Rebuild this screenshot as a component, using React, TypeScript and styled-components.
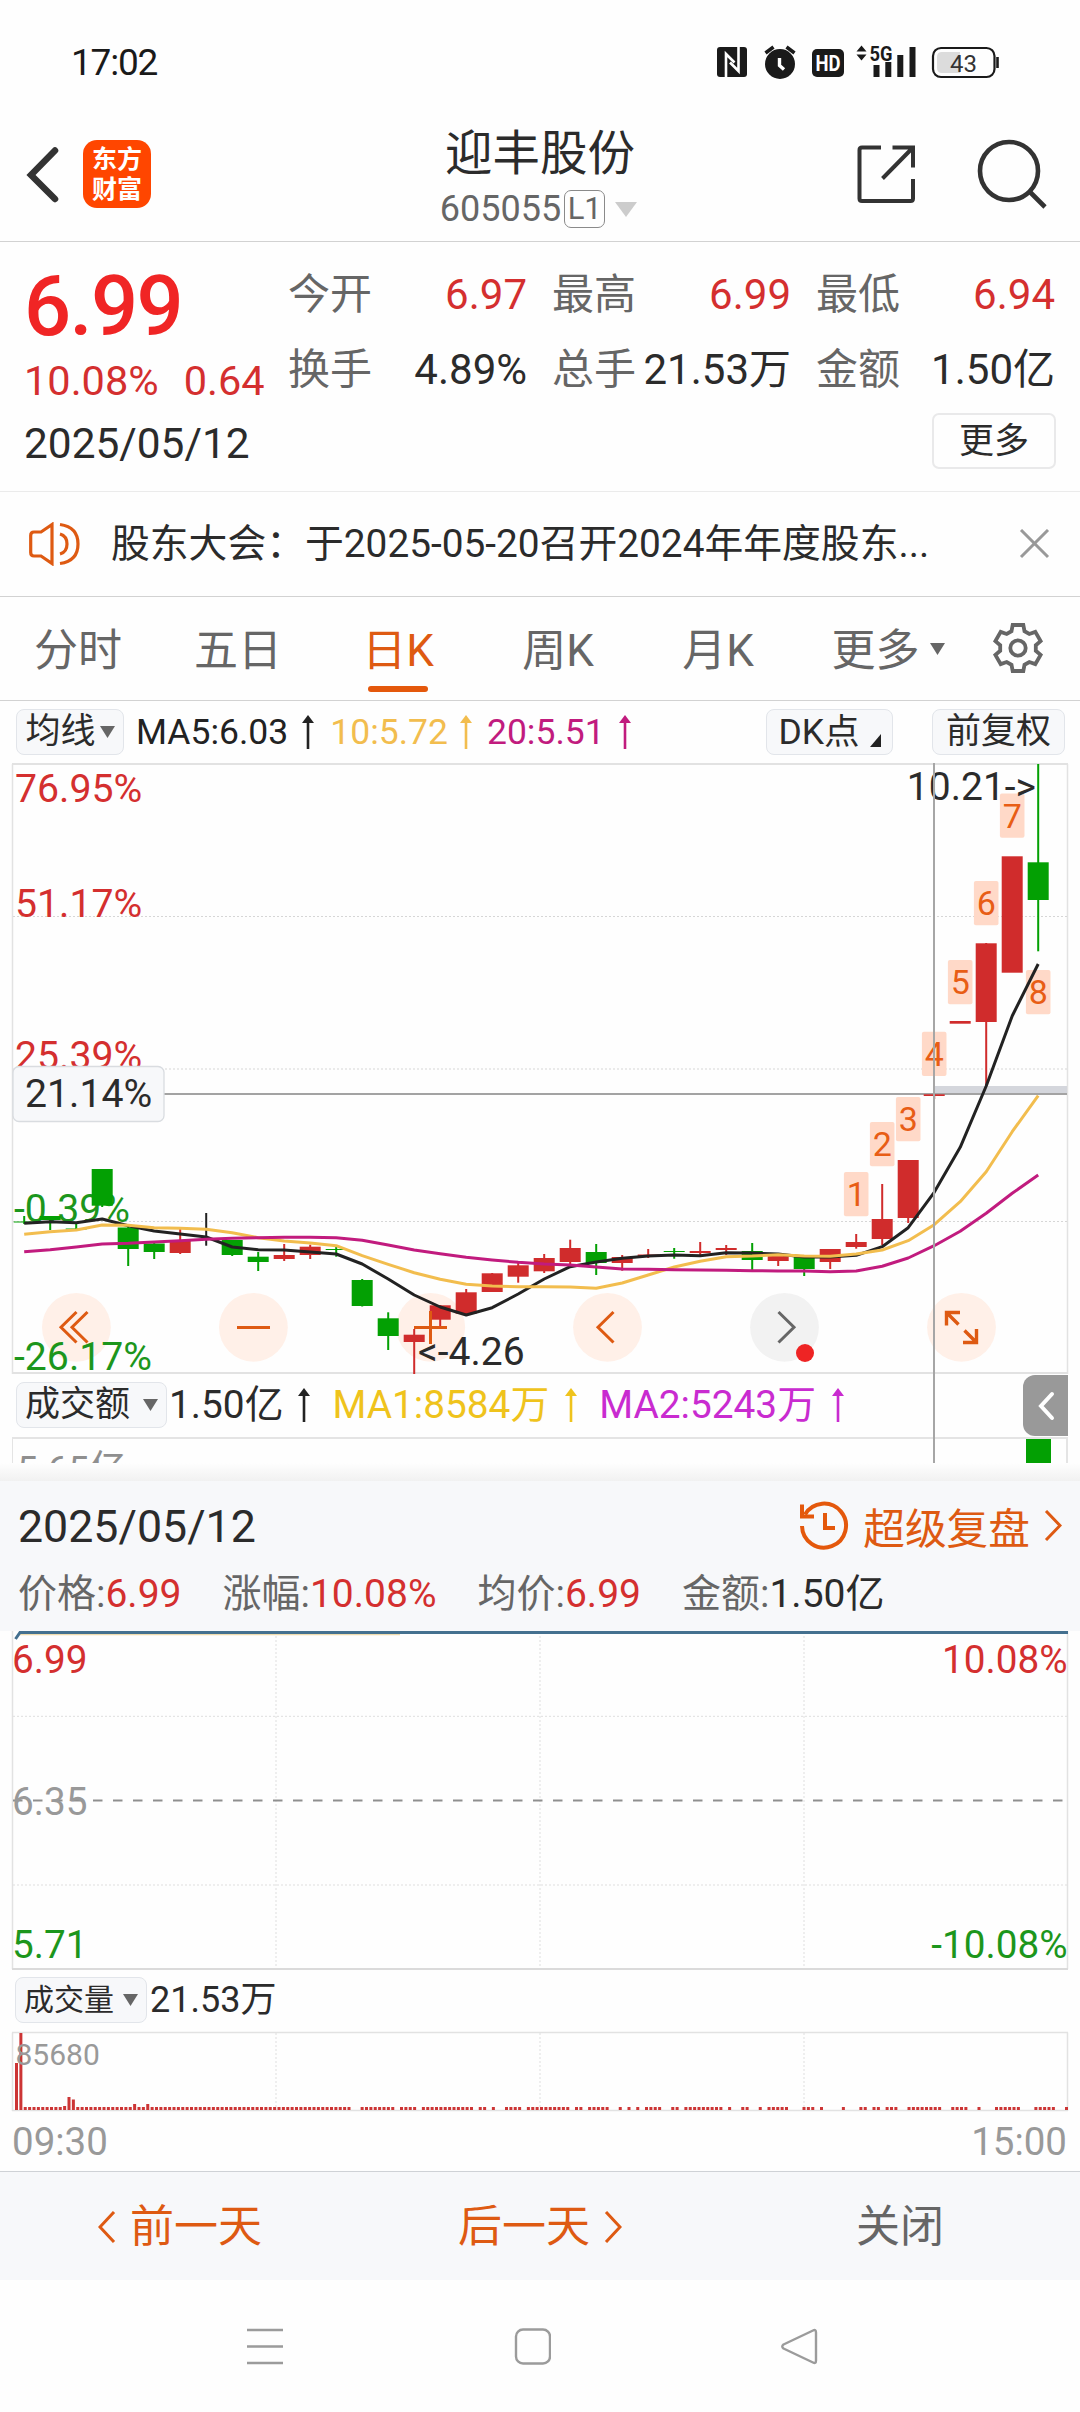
import React from "react";
import styled, { createGlobalStyle } from "styled-components";

const RED = "#d42f2f";
const GREEN = "#03a003";
const ORANGE = "#de5a12";
const INK = "#2b2b2b";
const GREY = "#666";
const MUTED = "#999";

const GlobalStyle = createGlobalStyle`
  * { box-sizing: border-box; }
  body {
    margin: 0;
    background: #fefefe;
    font-family: Roboto, "Noto Sans CJK SC", sans-serif;
    color: ${INK};
  }
  svg { display: block; flex: none; }
`;

const Screen = styled.div`
  width: 1080px;
  height: 2412px;
  display: flex;
  flex-direction: column;
  overflow: hidden;
  background: #fefefe;
`;

/* ---------- status bar ---------- */

const StatusBar = styled.div`
  height: 96px;
  padding: 27px 81px 0 71px;
  display: flex;
  justify-content: space-between;
`;
const Clock = styled.span`
  font-size: 37px;
  line-height: 72px;
  height: 72px;
  letter-spacing: -1.2px;
  color: #1a1a1a;
`;
const StatusIcons = styled.svg`
  margin-top: 13px;
`;

/* ---------- header ---------- */

const Header = styled.header`
  height: 146px;
  display: grid;
  grid-template-columns: 1fr 240px 1fr;
  border-bottom: 1px solid #d2d2d2;
`;
const HeaderLeft = styled.div`
  display: flex;
  align-items: flex-start;
  gap: 22px;
  padding: 44px 0 0 26px;
`;
const BackIcon = styled.svg`
  margin-top: 6px;
`;
const Logo = styled.div`
  width: 68px;
  height: 68px;
  border-radius: 14px;
  background: #ff4600;
  color: #fff;
  font-size: 25px;
  font-weight: 700;
  line-height: 30px;
  text-align: center;
  padding-top: 5px;
  margin-left: 1px;
`;
const HeaderTitle = styled.div`
  display: flex;
  flex-direction: column;
  align-items: center;
  padding-top: 30px;
`;
const StockName = styled.div`
  font-size: 47.5px;
  line-height: 57px;
  white-space: nowrap;
`;
const CodeRow = styled.div`
  display: flex;
  align-items: center;
  height: 52px;
  margin-left: -3px;
  color: ${GREY};
  font-size: 36px;
`;
const LevelTag = styled.span`
  height: 38px;
  width: 41px;
  margin: 0 10px 0 3px;
  border: 1.5px solid #8a8a8a;
  border-radius: 7px;
  font-size: 31px;
  line-height: 35px;
  text-align: center;
`;
const HeaderRight = styled.div`
  display: flex;
  justify-content: flex-end;
  gap: 60px;
  padding: 42px 30px 0 0;
`;

/* ---------- quote ---------- */

const Quote = styled.section`
  height: 250px;
  padding: 15px 25px 0 24px;
  border-bottom: 1px solid #ebebeb;
`;
const QuoteTop = styled.div`
  display: flex;
  height: 156px;
`;
const PriceBlock = styled.div`
  width: 264px;
  padding-top: 9px;
  color: ${RED};
`;
const BigPrice = styled.div`
  font-size: 83px;
  font-weight: 500;
  line-height: 82px;
  letter-spacing: -1.6px;
  color: #f02525;
`;
const ChangeRow = styled.div`
  display: flex;
  gap: 25px;
  font-size: 41.5px;
  line-height: 66px;
`;
const StatGrid = styled.div`
  flex: 1;
  display: grid;
  grid-template-columns: repeat(3, 239px);
  grid-auto-rows: 75px;
  column-gap: 25px;
`;
const Stat = styled.div`
  display: flex;
  justify-content: space-between;
  font-size: 42px;
  line-height: 75px;
  white-space: nowrap;
`;
const StatLabel = styled.span`
  color: ${GREY};
`;
const StatValue = styled.span<{ $red?: boolean }>`
  color: ${(p) => (p.$red ? RED : INK)};
`;
const QuoteBottom = styled.div`
  display: flex;
  justify-content: space-between;
  align-items: flex-start;
  font-size: 42.4px;
  line-height: 62px;
`;
const MoreButton = styled.button`
  width: 124px;
  height: 56px;
  margin-right: -1px;
  padding: 0;
  border: 2px solid #e9e9ea;
  border-radius: 7px;
  background: #fefefe;
  font: 35px/54px Roboto, "Noto Sans CJK SC", sans-serif;
  color: ${INK};
`;

/* ---------- news ---------- */

const NewsBar = styled.div`
  height: 105px;
  display: flex;
  align-items: center;
  padding: 0 30px 0 29px;
  border-bottom: 1px solid #d2d2d2;
  font-size: 38.8px;
`;
const NewsText = styled.span`
  flex: 1;
  margin-left: 30px;
  line-height: 60px;
`;

/* ---------- tabs ---------- */

const Tabs = styled.nav`
  height: 104px;
  display: flex;
  border-bottom: 1px solid #d2d2d2;
`;
const Tab = styled.div<{ $active?: boolean; $wide?: boolean }>`
  width: ${(p) => (p.$wide ? 180 : 160)}px;
  display: flex;
  flex-direction: column;
  align-items: center;
  font-size: 44px;
  line-height: 62px;
  padding: 23px 4px 0 0;
  color: ${(p) => (p.$active ? ORANGE : GREY)};
`;
const TabLabel = styled.span`
  display: flex;
  align-items: center;
  gap: 10px;
`;
const TabMark = styled.i`
  width: 60px;
  height: 6px;
  margin-top: 4px;
  border-radius: 3px;
  background: #e4580c;
`;
const TabCaret = styled.span`
  margin-top: -4px;
`;
const GearSlot = styled.div`
  padding: 24px 0 0 11px;
`;

/* ---------- indicator rows ---------- */

const IndicatorRow = styled.div<{ $h: number; $top: number; $size: number }>`
  height: ${(p) => p.$h}px;
  padding: ${(p) => p.$top}px 15px 0 16px;
  display: flex;
  align-items: flex-start;
  font-size: ${(p) => p.$size}px;
  white-space: nowrap;
`;
const Chip = styled.div<{ $w: number; $size?: number; $gap?: number; $ml?: number }>`
  width: ${(p) => p.$w}px;
  height: 46px;
  margin-left: ${(p) => p.$ml ?? 0}px;
  display: flex;
  align-items: center;
  justify-content: center;
  gap: ${(p) => p.$gap ?? 4}px;
  border: 1.5px solid #e2e5ea;
  border-radius: 8px;
  background: #f7f8fa;
  font-size: ${(p) => p.$size ?? 35}px;
  line-height: 46px;
`;
const IndicatorValue = styled.div<{ $c: string; $ml: number; $gap: number }>`
  display: flex;
  align-items: center;
  gap: ${(p) => p.$gap}px;
  margin-left: ${(p) => p.$ml}px;
  height: 46px;
  line-height: 46px;
  color: ${(p) => p.$c};
`;
const Push = styled.div`
  flex: 1;
`;

/* ---------- chart area ---------- */

const ChartStack = styled.div`
  position: relative;
  height: 700px;
`;
const CrossHair = styled.i`
  position: absolute;
  left: 933px;
  top: 0;
  width: 2px;
  height: 700px;
  background: #a6a6a6;
`;
const CollapseTab = styled.div`
  position: absolute;
  right: 12px;
  top: 612px;
  width: 45px;
  height: 61px;
  display: flex;
  align-items: center;
  justify-content: center;
  border-radius: 12px 0 0 12px;
  background: #999;
`;
const VolumePeek = styled.div`
  height: 26px;
  margin: 0 12px;
  padding-left: 4px;
  display: flex;
  justify-content: space-between;
  overflow: hidden;
  border: solid #e4e4e4;
  border-width: 2px 2px 0 1px;
  color: #8f8f8f;
  font-size: 37px;
  line-height: 62px;
`;
const PeekBar = styled.i`
  width: 25px;
  height: 26px;
  margin-right: 15px;
  background: ${GREEN};
`;

/* ---------- replay panel ---------- */

const PanelShadow = styled.div`
  height: 18px;
  background: linear-gradient(#fefefe, #f1f1f1);
`;
const ReplayHead = styled.section`
  height: 150px;
  padding: 16px 18px 0;
  background: #f7f8fa;
`;
const ReplayTitle = styled.div`
  display: flex;
  align-items: center;
  height: 60px;
  font-size: 44.7px;
`;
const ReplayLink = styled.div`
  margin-left: auto;
  margin-top: -3px;
  display: flex;
  align-items: center;
  gap: 14px;
  color: ${ORANGE};
  font-size: 41.7px;
`;
const ReplayStats = styled.div`
  display: flex;
  gap: 41px;
  height: 74px;
  font-size: 39px;
  line-height: 74px;
  color: ${GREY};
`;

const VolumeHead = styled.div`
  height: 60px;
  padding: 7px 15px 0;
  display: flex;
  gap: 3px;
  font-size: 36px;
  line-height: 47px;
`;
const TimeAxis = styled.div`
  height: 59px;
  padding: 0 13px 0 12px;
  display: flex;
  justify-content: space-between;
  color: ${MUTED};
  font-size: 38.5px;
  line-height: 60px;
`;
const DayBar = styled.div`
  height: 109px;
  display: grid;
  grid-template-columns: repeat(3, 360px);
  align-items: center;
  border-top: 1px solid #cfd2d6;
  background: #f7f8fa;
  font-size: 44px;
`;
const DayButton = styled.div<{ $c: string }>`
  display: flex;
  align-items: center;
  justify-content: center;
  gap: 14px;
  padding-top: 2px;
  color: ${(p) => p.$c};
  line-height: 60px;
`;
const SystemNav = styled.div`
  height: 132px;
  padding: 48px 262px 0 247px;
  display: flex;
  justify-content: space-between;
`;

/* ---------- small drawings ---------- */

const Down = ({ w = 15, h = 12, c = "#666" }: { w?: number; h?: number; c?: string }) => (
  <svg width={w} height={h} viewBox="0 0 10 10" preserveAspectRatio="none">
    <path d="M0 0H10L5 10Z" fill={c} />
  </svg>
);

const UpArrow = ({ c }: { c: string }) => (
  <svg width="12" height="34" viewBox="0 0 12 34">
    <path d="M6 4V34" stroke={c} strokeWidth="2.6" />
    <path d="M0 8L6 0L12 8Z" fill={c} />
  </svg>
);

const Chevron = ({ dir, c, w = 18, h = 32, s = 3 }: { dir: "l" | "r"; c: string; w?: number; h?: number; s?: number }) => (
  <svg width={w} height={h} viewBox={`0 0 ${w} ${h}`} fill="none" stroke={c} strokeWidth={s}>
    <path d={dir === "l" ? `M${w - 2} 1L2 ${h / 2}L${w - 2} ${h - 1}` : `M2 1L${w - 2} ${h / 2}L2 ${h - 1}`} />
  </svg>
);

const K = "#1a1a1a";
const Status = () => (
  <StatusIcons width="284" height="40" viewBox="715 40 284 40">
    <rect x="717" y="47" width="30" height="30" rx="3" fill={K} />
    <path d="M726 77V54L734.500 62.500" fill="none" stroke="#fff" strokeWidth="2.600" />
    <path d="M738.500 47V71L730 62.500" fill="none" stroke="#fff" strokeWidth="2.600" />
    <circle cx="780" cy="64" r="15" fill={K} />
    <path d="M765.500 53L773.500 47M794.500 53L786.500 47" stroke={K} strokeWidth="3.600" />
    <path d="M779.500 58V65.500L784 69.500" fill="none" stroke="#fff" strokeWidth="3.400" />
    <rect x="812" y="49" width="32" height="28" rx="5" fill={K} />
    <text x="828" y="71" fontSize="22" fontWeight="700" fill="#fff" textAnchor="middle" textLength="25" lengthAdjust="spacingAndGlyphs">HD</text>
    <path d="M856.500 51.500L861.500 45.500L866.500 51.500ZM856.500 54.500H866.500L861.500 60.500Z" fill={K} />
    <text x="869.500" y="60.500" fontSize="21" fontWeight="700" fill={K} textLength="23" lengthAdjust="spacingAndGlyphs">5G</text>
    <path d="M873.500 65h6v12h-6zM885.300 62h6v15h-6zM897.300 55h6v22h-6zM909.500 47h6v30h-6z" fill={K} />
    <rect x="933" y="48" width="61.500" height="29" rx="8" fill="none" stroke={K} strokeWidth="2.200" />
    <path d="M942 52H960V73H942Q937 73 937 68V57Q937 52 942 52Z" fill="#dcdcdc" />
    <path d="M997.500 57V68" stroke={K} strokeWidth="2.600" />
    <text x="963.500" y="71.500" fontSize="24" fill="#333" textAnchor="middle">43</text>
  </StatusIcons>
);

const gearOutline = Array.from({ length: 6 }, (_, i) => -90 + i * 60)
  .flatMap((base) =>
    [[-21, 18], [-13, 23.6], [13, 23.6], [21, 18]].map(([a, r]) => {
      const t = ((base + a) * Math.PI) / 180;
      return `${(27 + r * Math.cos(t)).toFixed(1)},${(27 + r * Math.sin(t)).toFixed(1)}`;
    })
  )
  .join(" ");

const Gear = () => (
  <svg width="54" height="54" viewBox="0 0 54 54" fill="none" stroke="#666" strokeWidth="3.8">
    <polygon points={gearOutline} />
    <circle cx="27" cy="27" r="7.700" />
  </svg>
);

/* ---------- daily chart data ---------- */

const X0 = 24.2;
const STEP = 26;
const cx = (i: number) => X0 + STEP * i;

type Candle = [kind: "r" | "g" | "k", top: number, bottom: number, high: number, low: number];
const candles: Candle[] = [
  ["g", 1221.5, 1222.5, 1216, 1224],
  ["g", 1216, 1220, 1216, 1230],
  ["g", 1228.5, 1229.5, 1222, 1231],
  ["g", 1169, 1205.7, 1169, 1207],
  ["g", 1227.5, 1249, 1227, 1266],
  ["g", 1243.5, 1252, 1243, 1259],
  ["r", 1241, 1253, 1229, 1254],
  ["k", 1236, 1237.5, 1213, 1245.7],
  ["g", 1240, 1255, 1240, 1256],
  ["g", 1256.7, 1262, 1252, 1271],
  ["r", 1255, 1259, 1244, 1261],
  ["r", 1246.7, 1255, 1244.7, 1259],
  ["g", 1249, 1250, 1246, 1256.7],
  ["g", 1280, 1306, 1279, 1306.5],
  ["g", 1318.3, 1336, 1312.3, 1350],
  ["r", 1334.7, 1342, 1329, 1374],
  ["r", 1305.3, 1319.7, 1305, 1326],
  ["r", 1292.3, 1313.7, 1289, 1314],
  ["r", 1273.3, 1292, 1273, 1292],
  ["r", 1265.3, 1276.7, 1261, 1282.7],
  ["r", 1258, 1271.3, 1254, 1273],
  ["r", 1248, 1262, 1239.7, 1264],
  ["g", 1252, 1263, 1244, 1275],
  ["r", 1257, 1263, 1255, 1270.7],
  ["r", 1254.5, 1256, 1249, 1258],
  ["g", 1251, 1252, 1248, 1258.7],
  ["r", 1251, 1253, 1242, 1255],
  ["r", 1248, 1250, 1245, 1255],
  ["g", 1251, 1260, 1243, 1272],
  ["r", 1255, 1261, 1255, 1266],
  ["g", 1256.7, 1269, 1256, 1276],
  ["r", 1249, 1262, 1249, 1269],
  ["r", 1242, 1247, 1234, 1248.7],
  ["r", 1219, 1239, 1184, 1245],
  ["r", 1160, 1218, 1160, 1223],
  ["r", 1094.3, 1096, 1094, 1099],
  ["r", 1021, 1023.7, 1021, 1023],
  ["r", 943.3, 1022, 943, 1086],
  ["r", 856.3, 972.7, 857, 972],
  ["g", 862.3, 900, 764, 951.3],
];
const ma5 = [1223.3, 1221.7, 1222.7, 1219, 1225.7, 1231, 1234, 1237, 1247, 1249.7, 1250, 1252, 1254, 1264, 1279, 1295, 1307, 1315, 1307.7, 1294, 1279, 1266.7, 1262, 1258.3, 1256, 1255, 1255.7, 1252.7, 1253, 1254, 1257, 1257, 1255.3, 1246.7, 1227.7, 1192.3, 1147.3, 1086, 1016, 964];
const ma10 = [1234.3, 1231.7, 1230, 1225, 1225.3, 1227.7, 1228.3, 1229.3, 1232.7, 1237.7, 1241, 1243, 1245.7, 1255.7, 1264.3, 1272.7, 1279.3, 1284.3, 1286, 1286.7, 1286.7, 1287, 1288.3, 1283, 1275, 1267, 1261.3, 1256.7, 1256, 1254.7, 1256, 1256.3, 1254, 1250, 1240.7, 1224.7, 1201.7, 1171.7, 1131.7, 1095.7];
const ma20 = [1251.7, 1249.7, 1247, 1244, 1243.3, 1242, 1240.7, 1239.3, 1238.3, 1237.7, 1237.3, 1237.3, 1237.7, 1240.3, 1245, 1250, 1253.7, 1257.3, 1260, 1262.3, 1264, 1265, 1267, 1269, 1269.3, 1269.7, 1270, 1270.3, 1270.7, 1271, 1271, 1271.7, 1271, 1266.3, 1258, 1245.7, 1231.3, 1213.3, 1193.3, 1175];
const line = (v: number[]) => v.map((y, i) => `${cx(i).toFixed(1)},${y}`).join(" ");

const badges: [string, number, number][] = [
  ["1", 32, 1172], ["2", 33, 1122], ["3", 34, 1097], ["4", 35, 1031.7],
  ["5", 36, 960], ["6", 37, 881], ["7", 38, 793.5], ["8", 39, 970],
];
const kindColor = { r: "#d02c2c", g: GREEN, k: "#222" };
const tools = [76.4, 253.4, 430.7, 607.5, 784.5, 961.5];

const DailyChart = () => (
  <svg width="1080" height="611" viewBox="0 763 1080 611">
    <path d="M12.500 764V1374M1067.500 764V1374" stroke="#e2e2e2" strokeWidth="1.500" />
    <path d="M12 764H1068M12 1373H1068" stroke="#e2e2e2" strokeWidth="2" />
    <path d="M13 916.500H1068M13 1069H1068M13 1221.500H1068" stroke="#d6d6d6" strokeWidth="1" strokeDasharray="2 2" />
    {tools.map((x, i) => (
      <circle key={x} cx={x} cy="1327.300" r="34.400" fill={i === 4 ? "#f2f2f2" : "#fff0e8"} />
    ))}
    <g fontSize="39.200" fill={RED}>
      <text x="15" y="802">76.95%</text>
      <text x="15" y="917">51.17%</text>
      <text x="15" y="1068.500">25.39%</text>
      <g fill="#1c961c">
        <text x="14" y="1222">-0.39%</text>
        <text x="14" y="1370">-26.17%</text>
      </g>
    </g>
    <rect x="934" y="1086" width="133" height="8" fill="#d4d6dc" />
    <path d="M164 1094H1067" stroke="#a3a3a3" strokeWidth="2" />
    {candles.map(([k, t, b, h, l], i) => (
      <g key={i} fill={kindColor[k]}>
        <rect x={cx(i) - 1} y={h} width="2" height={l - h} />
        {k !== "k" && <rect x={cx(i) - 10.5} y={t} width="21" height={Math.max(b - t, 1)} />}
      </g>
    ))}
    {badges.map(([n, i, y]) => (
      <g key={n}>
        <rect x={cx(i) - 12.3} y={y} width="24.600" height="44.200" rx="2" fill="#ffd9c8" />
        <text x={cx(i)} y={y + 34} fontSize="34" fill="#e85d15" textAnchor="middle">{n}</text>
      </g>
    ))}
    <g fill="none" strokeWidth="3" strokeLinejoin="round">
      <polyline points={line(ma5)} stroke="#222" />
      <polyline points={line(ma10)} stroke="#f2bd4e" />
      <polyline points={line(ma20)} stroke="#c11b7e" />
    </g>
    <g fill="none" stroke={ORANGE} strokeWidth="3">
      <path d="M76.500 1312L61 1327.300L76.500 1342.500M87.500 1312L72 1327.300L87.500 1342.500" />
      <path d="M237 1327.500H270M414 1327.500H447M430.500 1311V1344" />
      <path d="M613.500 1312L598 1327.300L613.500 1342.500" />
      <path d="M778.500 1312L794 1327.300L778.500 1342.500" stroke="#666" />
      <path d="M960 1312.500H946.500V1325.500M947 1313L958.500 1324.500M963 1342.500H976.500V1329M976 1342L964.500 1330.500" strokeWidth="3.400" />
    </g>
    <circle cx="805" cy="1353" r="9" fill="#ee2424" />
    <g fontSize="39" fill={INK}>
      <text x="418" y="1365">&lt;-4.26</text>
      <text x="1036" y="800" textAnchor="end">10.21-&gt;</text>
    </g>
    <rect x="13" y="1066.500" width="151" height="55" rx="6" fill="#f7f8fa" stroke="#d9dce0" strokeWidth="1.300" />
    <text x="25" y="1107" fontSize="39.200" fill={INK}>21.14%</text>
  </svg>
);

/* ---------- intraday charts ---------- */

const IntradayChart = () => (
  <svg width="1080" height="339" viewBox="0 1631 1080 339">
    <path d="M12.500 1631V1969M1067.500 1631V1969" stroke="#e2e2e2" strokeWidth="1.500" />
    <path d="M12 1969H1068" stroke="#dadada" strokeWidth="2" />
    <path d="M276 1636V1968M540 1636V1968M804 1636V1968M13 1716.300H1068M13 1885H1068" stroke="#dedede" strokeWidth="1" strokeDasharray="2 2" />
    <path d="M13 1800.500H1068" stroke="#8f8f8f" strokeWidth="2" strokeDasharray="9.500 10.500" />
    <path d="M20 1634.500H400" stroke="#f0dcae" strokeWidth="1.500" />
    <path d="M15.500 1639L20 1632.500H1068" stroke="#44708f" strokeWidth="3" fill="none" />
    <g fontSize="38.700">
      <text x="12" y="1673" fill={RED}>6.99</text>
      <text x="1067.500" y="1673" fill={RED} textAnchor="end">10.08%</text>
      <text x="12" y="1815" fill={MUTED}>6.35</text>
      <text x="12" y="1958" fill="#1c961c">5.71</text>
      <text x="1067.500" y="1958" fill="#1c961c" textAnchor="end">-10.08%</text>
    </g>
  </svg>
);

const volumeRuns = [
  [2, 76], [79, 86], [88, 91], [93, 104], [106, 107], [109, 109], [112, 115], [117, 126], [128, 129],
  [131, 135], [138, 138], [140, 140], [142, 142], [144, 147], [150, 151], [153, 161], [163, 163],
  [166, 167], [170, 170], [172, 176], [180, 182], [184, 184], [189, 189], [193, 194], [196, 197],
  [199, 201], [204, 211], [214, 217], [220, 220], [224, 229], [233, 237], [240, 240],
];
const tallBars: Record<number, number> = { 11: 4, 12: 13, 13: 10.5, 27: 6, 30: 6 };
const volumeBars: [number, number][] = [[0, 47], [1, 77]];
volumeRuns.forEach(([a, b]) => {
  for (let k = a; k <= b; k++) volumeBars.push([k, tallBars[k] ?? 3]);
});

const VolumeChart = () => (
  <svg width="1080" height="82" viewBox="0 2030 1080 82">
    <path d="M12.500 2032.500V2111M1067.500 2032.500V2111M12 2032.500H1068M12 2110.500H1068" stroke="#e2e2e2" strokeWidth="1.500" />
    <path d="M276 2033V2110M540 2033V2110M804 2033V2110" stroke="#dedede" strokeWidth="1" strokeDasharray="2 2" />
    {volumeBars.map(([k, h]) => (
      <rect key={k} x={15 + k * 4.375} y={2110 - h} width="3" height={h} fill="#cc3535" />
    ))}
    <text x="15.500" y="2065" fontSize="30" fill={MUTED}>85680</text>
  </svg>
);

const stats: [string, string, boolean][] = [
  ["今开", "6.97", true], ["最高", "6.99", true], ["最低", "6.94", true],
  ["换手", "4.89%", false], ["总手", "21.53万", false], ["金额", "1.50亿", false],
];

export default function App() {
  return (
    <>
      <GlobalStyle />
      <Screen>
        <StatusBar>
          <Clock>17:02</Clock>
          <Status />
        </StatusBar>

        <Header>
          <HeaderLeft>
            <BackIcon width="34" height="58" viewBox="0 0 34 58" fill="none" stroke="#333" strokeWidth="6.500" strokeLinecap="round" strokeLinejoin="miter">
              <path d="M29 4.500L5 29L29 53" />
            </BackIcon>
            <Logo>东方<br />财富</Logo>
          </HeaderLeft>
          <HeaderTitle>
            <StockName>迎丰股份</StockName>
            <CodeRow>
              605055
              <LevelTag>L1</LevelTag>
              <Down w={22} h={15} c="#ccc" />
            </CodeRow>
          </HeaderTitle>
          <HeaderRight>
            <svg width="62" height="66" viewBox="855 138 62 66" fill="none" stroke="#333" strokeWidth="4">
              <path d="M881 147.500H862Q859.500 147.500 859.500 150V198.500Q859.500 201 862 201H910.500Q913 201 913 198.500V179" />
              <path d="M892.500 147.500H913V167.500M913 147.500L882.500 178.500" />
            </svg>
            <svg width="73" height="72" viewBox="977 138 73 72" fill="none" stroke="#333" strokeWidth="4.600">
              <circle cx="1009" cy="171" r="29" />
              <path d="M1030 192L1045 207" />
            </svg>
          </HeaderRight>
        </Header>

        <Quote>
          <QuoteTop>
            <PriceBlock>
              <BigPrice>6.99</BigPrice>
              <ChangeRow><span>10.08%</span><span>0.64</span></ChangeRow>
            </PriceBlock>
            <StatGrid>
              {stats.map(([label, value, red]) => (
                <Stat key={label}>
                  <StatLabel>{label}</StatLabel>
                  <StatValue $red={red}>{value}</StatValue>
                </Stat>
              ))}
            </StatGrid>
          </QuoteTop>
          <QuoteBottom>
            <span>2025/05/12</span>
            <MoreButton>更多</MoreButton>
          </QuoteBottom>
        </Quote>

        <NewsBar>
          <svg width="52" height="44" viewBox="0 0 52 44" fill="none" stroke={ORANGE} strokeWidth="3.200">
            <path d="M23 2.500L12 10H5Q1.700 10 1.700 13.500V30.500Q1.700 34 5 34H12L23 41.500Z" />
            <path d="M31 12Q38 14 38 22Q38 30 31 32M31 2.500Q49 5 49 22Q49 39 31 41.500" />
          </svg>
          <NewsText>股东大会：于2025-05-20召开2024年年度股东...</NewsText>
          <svg width="31" height="31" viewBox="0 0 31 31" stroke="#999" strokeWidth="3">
            <path d="M2 1L29 28M29 1L2 28" />
          </svg>
        </NewsBar>

        <Tabs>
          <Tab><TabLabel>分时</TabLabel></Tab>
          <Tab><TabLabel>五日</TabLabel></Tab>
          <Tab $active><TabLabel>日K</TabLabel><TabMark /></Tab>
          <Tab><TabLabel>周K</TabLabel></Tab>
          <Tab><TabLabel>月K</TabLabel></Tab>
          <Tab $wide><TabLabel>更多<TabCaret><Down w={15} h={12} /></TabCaret></TabLabel></Tab>
          <GearSlot><Gear /></GearSlot>
        </Tabs>

        <IndicatorRow $h={62} $top={8} $size={35.5}>
          <Chip $w={108}>均线<Down w={15} h={12} /></Chip>
          <IndicatorValue $c="#222" $ml={12} $gap={14}>MA5:6.03<UpArrow c="#222" /></IndicatorValue>
          <IndicatorValue $c="#f2bd4e" $ml={16} $gap={12}>10:5.72<UpArrow c="#f2bd4e" /></IndicatorValue>
          <IndicatorValue $c="#c11b7e" $ml={15} $gap={14}>20:5.51<UpArrow c="#c11b7e" /></IndicatorValue>
          <Push />
          <Chip $w={127} $gap={10} $size={35.5}>
            DK点
            <svg width="11" height="40" viewBox="0 0 11 40"><path d="M11 22V35H0Z" fill="#222" /></svg>
          </Chip>
          <Chip $w={133} $ml={39}>前复权</Chip>
        </IndicatorRow>

        <ChartStack>
          <DailyChart />
          <IndicatorRow $h={63} $top={8} $size={38.8}>
            <Chip $w={151} $gap={13}>成交额<Down w={15} h={12} /></Chip>
            <IndicatorValue $c={INK} $ml={2} $gap={15}>1.50亿<UpArrow c="#222" /></IndicatorValue>
            <IndicatorValue $c="#efc31c" $ml={22} $gap={16}>MA1:8584万<UpArrow c="#efc31c" /></IndicatorValue>
            <IndicatorValue $c="#c92bd0" $ml={22} $gap={16}>MA2:5243万<UpArrow c="#c92bd0" /></IndicatorValue>
          </IndicatorRow>
          <VolumePeek>
            5.65亿
            <PeekBar />
          </VolumePeek>
          <CrossHair />
          <CollapseTab>
            <svg width="20" height="32" viewBox="0 0 20 32" fill="none" stroke="#fff" strokeWidth="4" strokeLinecap="round">
              <path d="M16 4L5 16L16 28" />
            </svg>
          </CollapseTab>
        </ChartStack>

        <PanelShadow />
        <ReplayHead>
          <ReplayTitle>
            2025/05/12
            <ReplayLink>
              <svg width="50" height="50" viewBox="0 0 50 50" fill="none" stroke="#e4580c" strokeWidth="4">
                <path d="M6 13.500A22 22 0 1 1 3 25" />
                <path d="M3 3.500V15.500H15" />
                <path d="M26 12V27H36" />
              </svg>
              超级复盘
              <Chevron dir="r" c={ORANGE} h={31} />
            </ReplayLink>
          </ReplayTitle>
          <ReplayStats>
            <span>价格:<StatValue $red>6.99</StatValue></span>
            <span>涨幅:<StatValue $red>10.08%</StatValue></span>
            <span>均价:<StatValue $red>6.99</StatValue></span>
            <span>金额:<StatValue>1.50亿</StatValue></span>
          </ReplayStats>
        </ReplayHead>

        <IntradayChart />
        <VolumeHead>
          <Chip $w={132} $size={30} $gap={9}>成交量<Down w={15} h={12} /></Chip>
          21.53万
        </VolumeHead>
        <VolumeChart />
        <TimeAxis><span>09:30</span><span>15:00</span></TimeAxis>

        <DayBar>
          <DayButton $c={ORANGE}><Chevron dir="l" c={ORANGE} />前一天</DayButton>
          <DayButton $c={ORANGE}>后一天<Chevron dir="r" c={ORANGE} /></DayButton>
          <DayButton $c={GREY}>关闭</DayButton>
        </DayBar>
        <SystemNav>
          <svg width="36" height="38" viewBox="0 0 36 38" stroke="#9b9b9b" strokeWidth="2.600">
            <path d="M0 2H36M0 18.500H36M0 35H36" />
          </svg>
          <svg width="38" height="38" viewBox="-1 0 38 38" fill="none" stroke="#9b9b9b" strokeWidth="2.400">
            <rect x="2" y="1.500" width="34" height="34" rx="7" />
          </svg>
          <svg width="38" height="38" viewBox="0 0 38 38" fill="none" stroke="#9b9b9b" strokeWidth="2.400" strokeLinejoin="round">
            <path d="M33 2.500Q36 1 36 4.500V32.500Q36 36 33 34.500L3.500 20.500Q1 18.500 3.500 16.500Z" />
          </svg>
        </SystemNav>
      </Screen>
    </>
  );
}
